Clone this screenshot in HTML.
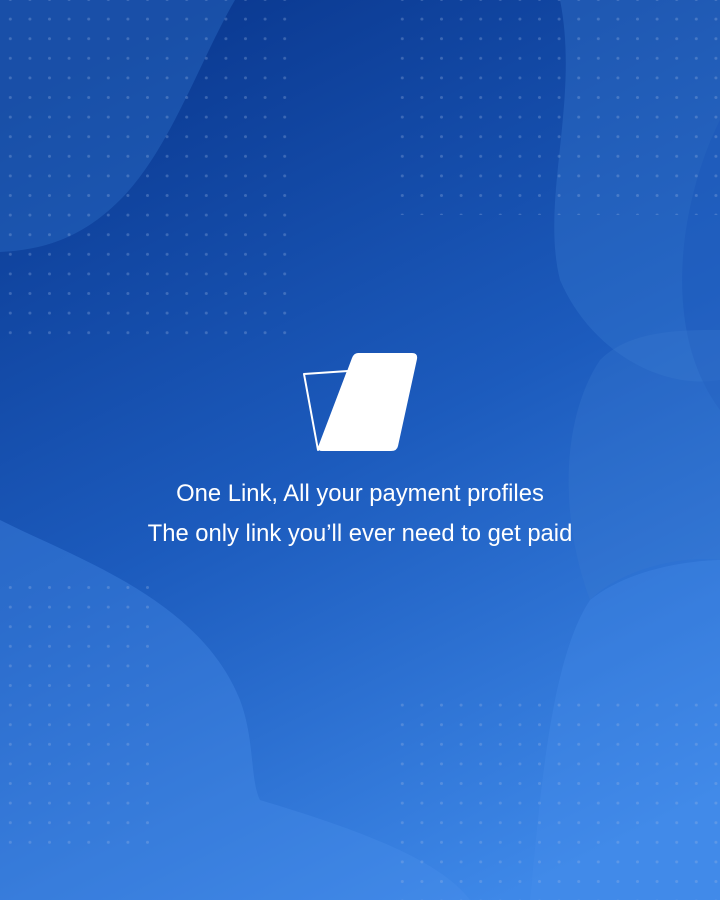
<!DOCTYPE html>
<html><head><meta charset="utf-8"><style>
html,body{margin:0;padding:0;width:720px;height:900px;overflow:hidden;font-family:"Liberation Sans",sans-serif}
.t{position:absolute;left:0;width:720px;text-align:center;color:#fff;font-size:23.8px;line-height:28px}
</style></head><body>
<svg width="720" height="900" style="position:absolute;left:0;top:0">
<defs>
<linearGradient id="bg" x1="0.3" y1="0" x2="0.7" y2="1">
<stop offset="0" stop-color="#0b3a92"/><stop offset="0.5" stop-color="#1c5bbd"/><stop offset="1" stop-color="#3e88e8"/>
</linearGradient>
<pattern id="d" width="19.6" height="19.6" patternUnits="userSpaceOnUse" x="0.5" y="9.3">
<circle cx="9.8" cy="9.8" r="1.5" fill="#9ab6e4" fill-opacity="0.32"/></pattern>
</defs>
<rect width="720" height="900" fill="url(#bg)"/>
<path d="M0 0H235C200 60 170 150 120 200C80 240 40 250 0 252Z" fill="#2a6ac4" fill-opacity="0.45"/>
<path d="M560 0H720V380C660 390 590 350 560 280C540 200 580 100 560 0Z" fill="#3a7ad0" fill-opacity="0.35"/>
<path d="M720 120C680 200 660 330 720 410Z" fill="#1a55b8" fill-opacity="0.4"/>
<path d="M600 360C560 420 560 520 590 600C620 570 680 555 720 560V330C680 330 630 330 600 360Z" fill="#3a7ad0" fill-opacity="0.3"/>
<path d="M0 520C80 560 200 600 240 700C255 740 250 780 260 800C360 830 440 860 470 900H0Z" fill="#4a90ec" fill-opacity="0.35"/>
<path d="M590 600C640 560 720 560 720 560V900H530C540 800 550 660 590 600Z" fill="#4a90ec" fill-opacity="0.3"/>
<rect x="0" y="0" width="290" height="340" fill="url(#d)"/>
<rect x="400" y="0" width="320" height="215" fill="url(#d)"/>
<rect x="0" y="570" width="162" height="275" fill="url(#d)"/>
<rect x="400" y="700" width="320" height="200" fill="url(#d)"/>
<path d="M304 374L348 371L318 450L304 374Z" fill="none" stroke="#fff" stroke-width="2" stroke-linejoin="round"/>
<path d="M358 353L412 353Q418 353 417 359L398 446Q397 451 391 451L322 451Q317 451 319 446L352 358Q354 353 358 353Z" fill="#fff"/>
</svg>
<div class="t" style="top:480px">One Link, All your payment profiles</div>
<div class="t" style="top:520px">The only link you’ll ever need to get paid</div>
</body></html>
